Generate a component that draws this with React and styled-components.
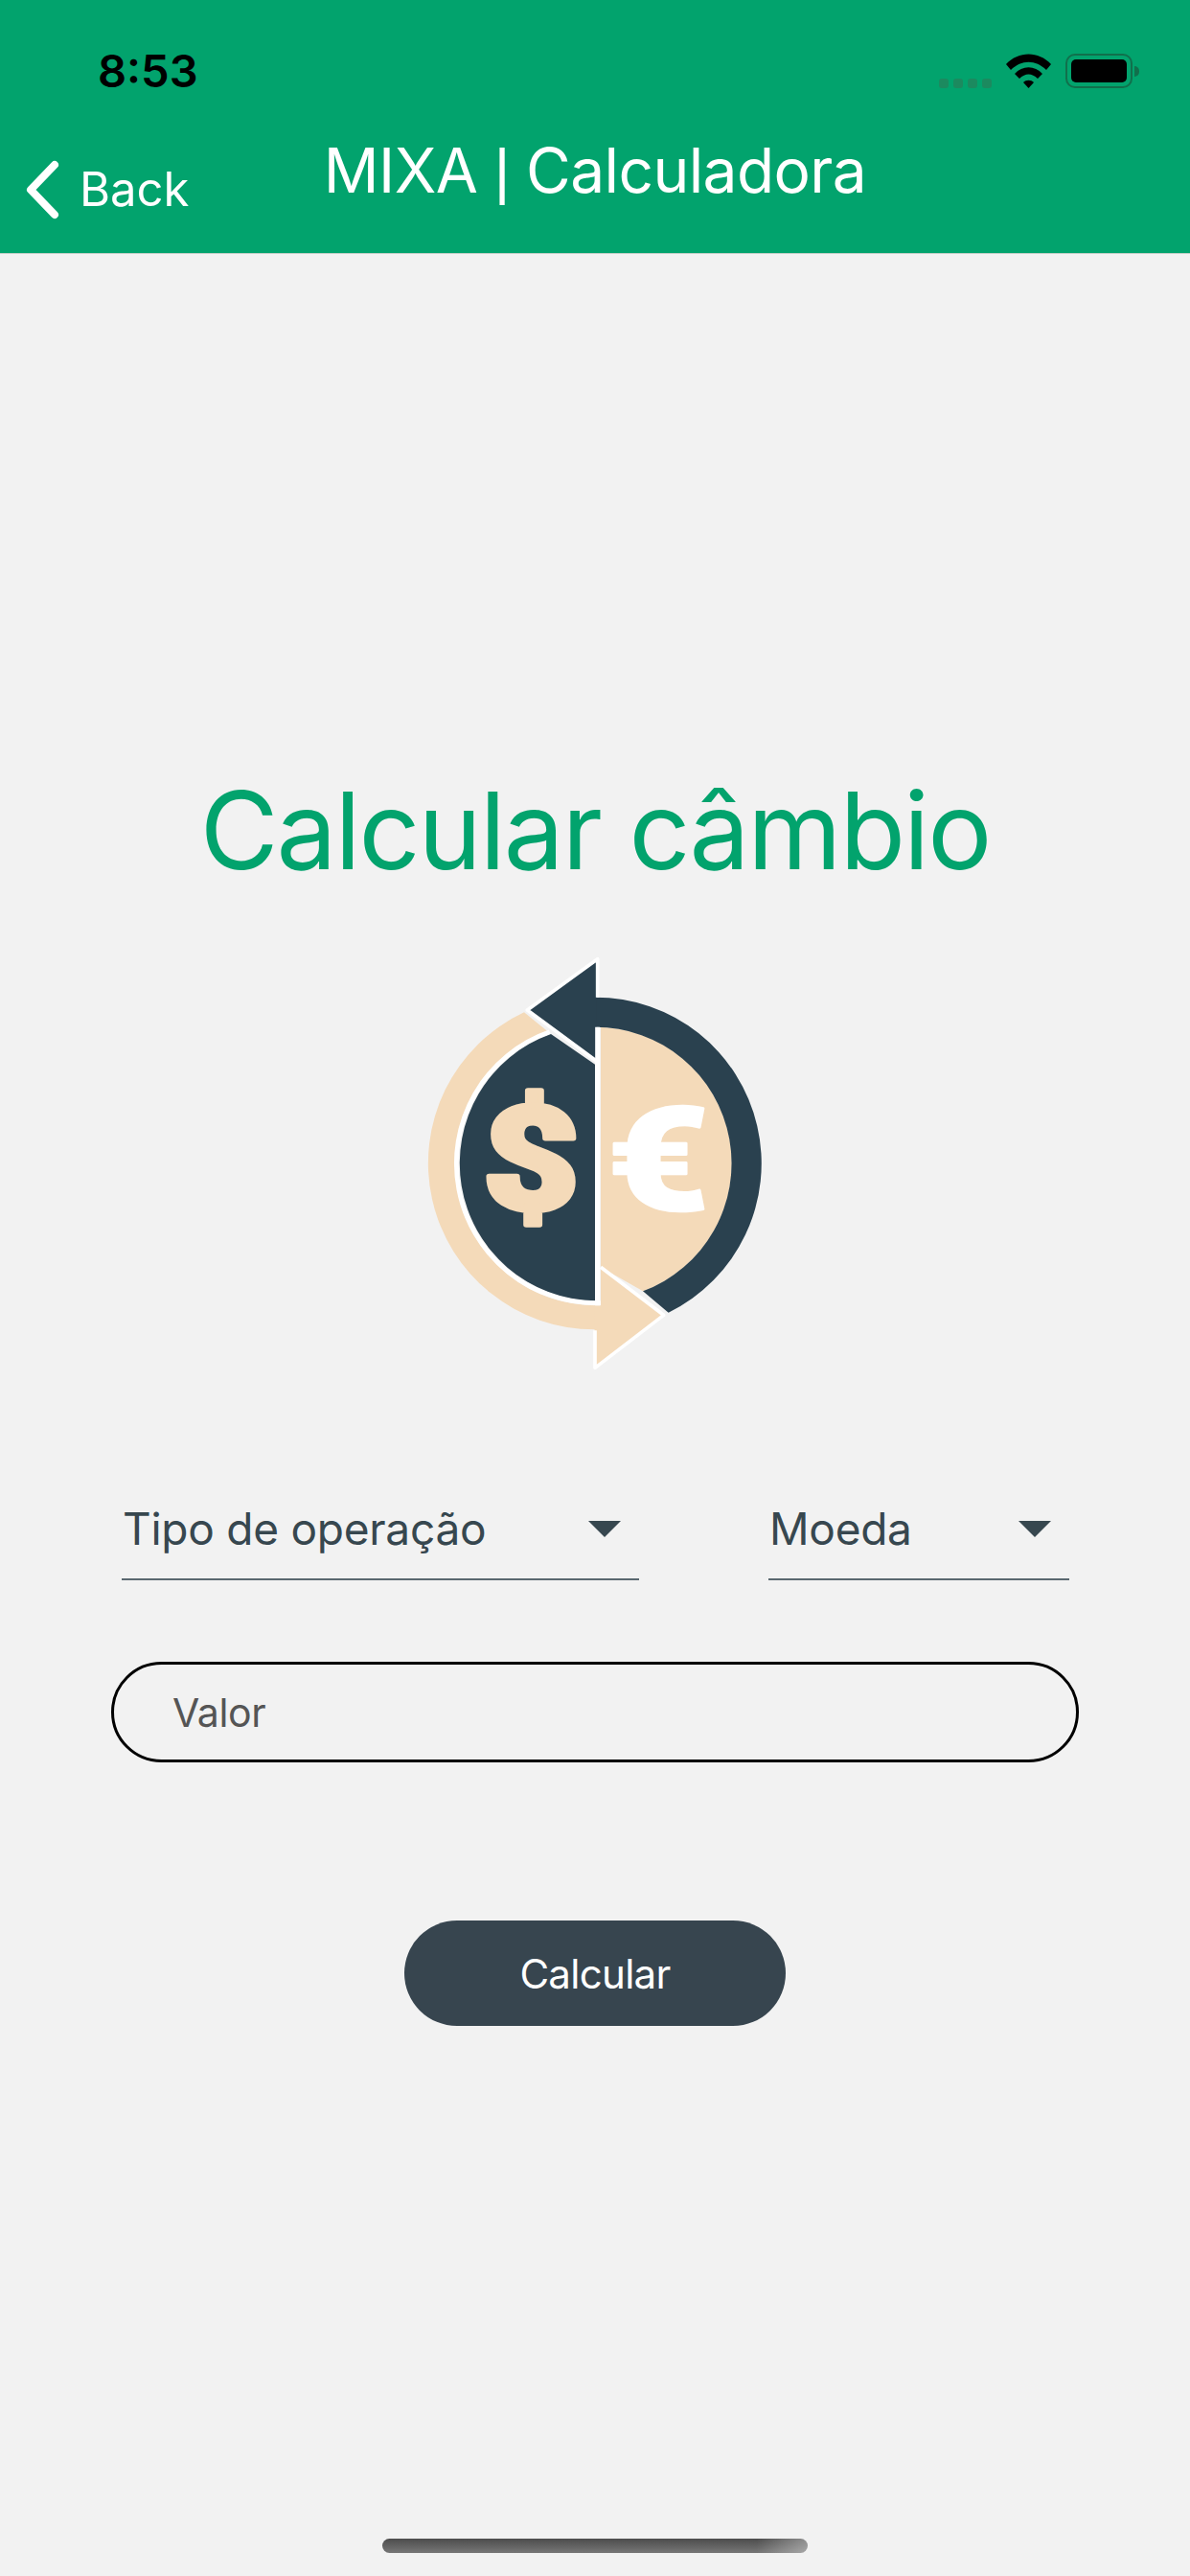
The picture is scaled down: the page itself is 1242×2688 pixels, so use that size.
import React from 'react';
import styled, { createGlobalStyle } from 'styled-components';

const GlobalStyle = createGlobalStyle`
  html, body {
    margin: 0;
    padding: 0;
    background: #f2f2f2;
  }
  * {
    box-sizing: border-box;
  }
`;

const Page = styled.div`
  width: 1242px;
  height: 2688px;
  display: flex;
  flex-direction: column;
  background: #f2f2f2;
  font-family: Inter, "Liberation Sans", sans-serif;
`;

const Header = styled.header`
  height: 265px;
  flex: none;
  background: #02a36d;
  border-bottom: 1px solid #c4cfc9;
`;

const StatusBar = styled.div`
  height: 140px;
  padding: 48px 60px 0 102px;
  display: flex;
  justify-content: space-between;
  align-items: flex-start;
`;

const Time = styled.span`
  font-size: 47px;
  line-height: 52px;
  font-weight: 600;
  color: #000;
`;

const StatusIcons = styled.div`
  display: flex;
  align-items: flex-end;
  margin-top: 8px;
  height: 36px;
`;

const SignalDots = styled.div`
  display: flex;
  gap: 5px;
  margin-right: 15px;
`;

const Dot = styled.span`
  width: 10px;
  height: 10px;
  border-radius: 3px;
  background: #1c8a5f;
`;

const Battery = styled.div`
  width: 70px;
  height: 36px;
  margin-left: 15px;
  padding: 4px;
  border: 2px solid #11704c;
  border-radius: 10px;
  position: relative;
`;

const BatteryFill = styled.div`
  width: 100%;
  height: 100%;
  background: #000;
  border-radius: 5px;
`;

const BatteryNub = styled.span`
  position: absolute;
  right: -9px;
  top: 11px;
  width: 5px;
  height: 11px;
  background: #11704c;
  border-radius: 0 5px 5px 0;
`;

const NavBar = styled.nav`
  display: grid;
  grid-template-columns: 1fr auto 1fr;
  padding-left: 26px;
  color: #fff;
`;

const BackLink = styled.a`
  display: flex;
  align-items: center;
  gap: 21px;
  height: 62px;
  margin-top: 27px;
  font-size: 49px;
  line-height: 62px;
`;

const NavTitle = styled.h1`
  margin: 0 0 0 -26px;
  font-size: 64px;
  line-height: 76px;
  font-weight: 400;
  letter-spacing: -0.6px;
`;

const Pipe = styled.span`
  font-family: "Liberation Sans", sans-serif;
`;

const Main = styled.main`
  flex: 1;
  display: flex;
  flex-direction: column;
  align-items: center;
  padding-top: 531px;
`;

const Title = styled.h2`
  margin: 0;
  color: #02a36d;
  font-size: 112px;
  line-height: 140px;
  font-weight: 400;
  letter-spacing: -2px;
`;

const Logo = styled.svg`
  display: block;
  width: 400px;
  height: 460px;
  margin-top: 43px;
`;

const Form = styled.div`
  width: 1010px;
  margin-top: 91px;
`;

const Selects = styled.div`
  display: flex;
  padding: 0 12px 0 11px;
  gap: 135px;
`;

const Select = styled.div`
  width: ${(p) => p.$width}px;
  height: 119px;
  flex: none;
  padding: 37px 19px 0 1px;
  display: flex;
  justify-content: space-between;
  align-items: flex-start;
  border-bottom: 2px solid #5a6870;
  color: #37474f;
  font-size: 46px;
  line-height: 56px;
  letter-spacing: -0.25px;
`;

const Caret = styled.span`
  width: 34px;
  height: 17px;
  margin-top: 20px;
  background: #37474f;
  clip-path: polygon(0 0, 100% 0, 50% 100%);
`;

const ValueInput = styled.input`
  display: block;
  width: 100%;
  height: 105px;
  margin-top: 85px;
  padding: 0 61px;
  border: 3px solid #000;
  border-radius: 53px;
  background: transparent;
  outline: none;
  font-family: inherit;
  font-size: 41px;
  letter-spacing: -0.4px;
  color: #555;

  &::placeholder {
    color: #555;
    opacity: 1;
  }
`;

const CalcButton = styled.button`
  width: 398px;
  height: 110px;
  margin-top: 165px;
  border: none;
  border-radius: 55px;
  background: #37454f;
  color: #fff;
  font-family: inherit;
  font-size: 42px;
  letter-spacing: -0.7px;
`;

const HomeIndicator = styled.div`
  width: 444px;
  height: 15px;
  margin-top: auto;
  margin-bottom: 24px;
  border-radius: 8px;
  background: linear-gradient(90deg, transparent 88%, rgba(242, 242, 242, 0.4) 100%),
    linear-gradient(180deg, #4c4c4c 0%, #777 100%);
`;

const BackIcon = () => (
  <svg width="36" height="62" viewBox="0 0 36 62" fill="none">
    <path d="M31 5 L6 31 L31 57" stroke="#fff" strokeWidth="8" strokeLinecap="round" strokeLinejoin="round" />
  </svg>
);

const WifiIcon = () => (
  <svg width="47" height="36" viewBox="0 0 47 36">
    <path d="M0 11 C13 -3 34 -3 47 11 L42 17 C31 6 16 6 5 17 Z" fill="#000" />
    <path d="M9 21 C17 12 30 12 38 21 L33 26 C27 20 20 20 14 26 Z" fill="#000" />
    <path d="M18 30 C21 27 26 27 29 30 L23.5 36 Z" fill="#000" />
  </svg>
);

const ExchangeLogo = () => (
  <Logo viewBox="0 0 1200 1380">
    {/* anel bege com a seta de baixo */}
    <path d="M378 232 L450 290 A444 444 0 0 0 600 1150 L600 1225 A521 521 0 0 1 378 232 Z" fill="#f4dab9" />
    <path d="M598 1150 L618 1150 L618 1035 L815 1180 L600 1345 Z" fill="#f4dab9" />
    {/* metade do dolar */}
    <path d="M600 395 L462 300 A430 430 0 0 0 600 1135 Z" fill="#2a414f" />
    <path d="M458 293 A437 437 0 0 0 618 1142" fill="none" stroke="#fff" strokeWidth="14" />
    {/* metade do euro */}
    <path d="M618 278 A427 427 0 0 1 750 1105 L618 1030 Z" fill="#f4dab9" />
    {/* anel escuro com a seta de cima */}
    <path d="M600 185 A520 520 0 0 1 830 1172 L750 1105 A427 427 0 0 0 600 278 Z" fill="#2a414f" />
    <path d="M605 65 L388 225 L605 385 Z" fill="#2a414f" />
    <path d="M608 185 L608 65 L388 225 L605 385" fill="none" stroke="#fff" strokeWidth="11" strokeLinejoin="round" />
    <path d="M608 278 L608 1150" stroke="#fff" strokeWidth="15" />
    <path d="M618 1030 L815 1180 L600 1345 L600 1228" fill="none" stroke="#fff" strokeWidth="11" strokeLinejoin="round" />
    <text transform="translate(400 850) scale(1.17 1)" textAnchor="middle" fontFamily="Roboto, sans-serif" fontWeight="900" fontSize="450" fill="#f4dab9" stroke="#f4dab9" strokeWidth="16" strokeLinejoin="round">$</text>
    <text transform="translate(798 853) scale(1.23 1)" textAnchor="middle" fontFamily="Roboto, sans-serif" fontWeight="900" fontSize="450" fill="#fff" stroke="#fff" strokeWidth="8" strokeLinejoin="round">€</text>
  </Logo>
);

export default function App() {
  return (
    <Page>
      <GlobalStyle />
      <Header>
        <StatusBar>
          <Time>8:53</Time>
          <StatusIcons>
            <SignalDots>
              <Dot />
              <Dot />
              <Dot />
              <Dot />
            </SignalDots>
            <WifiIcon />
            <Battery>
              <BatteryFill />
              <BatteryNub />
            </Battery>
          </StatusIcons>
        </StatusBar>
        <NavBar>
          <BackLink>
            <BackIcon />
            Back
          </BackLink>
          <NavTitle>
            MIXA <Pipe>|</Pipe> Calculadora
          </NavTitle>
          <span />
        </NavBar>
      </Header>
      <Main>
        <Title>Calcular câmbio</Title>
        <ExchangeLogo />
        <Form>
          <Selects>
            <Select $width={540}>
              Tipo de operação
              <Caret />
            </Select>
            <Select $width={314}>
              Moeda
              <Caret />
            </Select>
          </Selects>
          <ValueInput placeholder="Valor" />
        </Form>
        <CalcButton>Calcular</CalcButton>
        <HomeIndicator />
      </Main>
    </Page>
  );
}
